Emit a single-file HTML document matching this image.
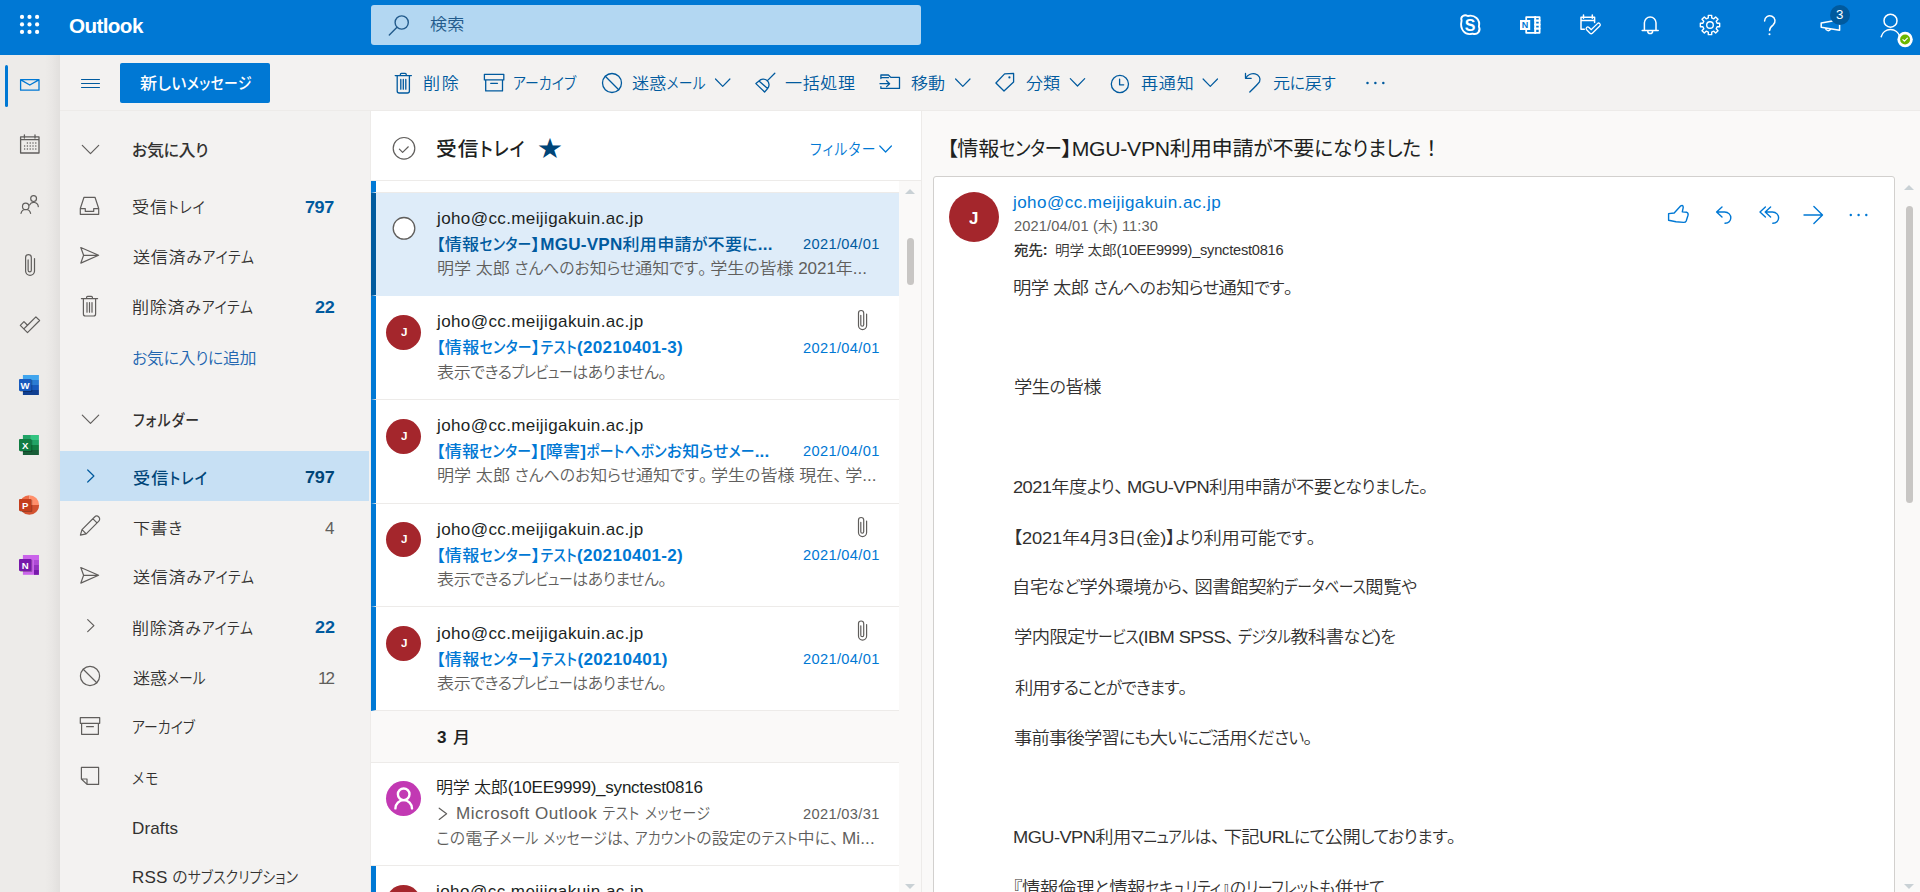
<!DOCTYPE html>
<html lang="ja">
<head>
<meta charset="utf-8">
<title>メール - Outlook</title>
<style>
*{box-sizing:border-box;margin:0;padding:0}
html,body{width:1920px;height:892px;overflow:hidden;background:#faf9f8}
body{position:relative;font-family:"Liberation Sans","Noto Sans CJK JP",sans-serif;font-size:16px;color:#323130;font-feature-settings:"palt" 1}
.k{display:inline-block;font-size:.81em;transform:scaleY(1.235);transform-origin:0 84.65%}
.h{display:inline-block;font-size:.93em;transform:scaleY(1.075);transform-origin:0 84.65%}
.p{font-feature-settings:normal;letter-spacing:-0.3em}
.t{position:absolute;white-space:nowrap;line-height:1;display:block;transform:scaleX(1.06);transform-origin:0 50%}
svg{position:absolute;overflow:visible;fill:none}
#hdr{position:absolute;left:0;top:0;width:1920px;height:55px;background:#0078d4}
#search{position:absolute;left:371px;top:5px;width:550px;height:40px;background:#b3d7f2;border-radius:3px}
#rail{position:absolute;left:0;top:55px;width:59.5px;height:837px;background:linear-gradient(to right,#edebe9 0,#edebe9 45px,#e9e7e5 52px,#e2e0de 59.5px)}
#nav{position:absolute;left:59px;top:55px;width:312px;height:837px;background:#f3f2f1;border-right:1px solid #edebe9}
#tool{position:absolute;left:59px;top:55px;width:1861px;height:56px;background:#f3f2f1;border-bottom:1px solid #edebe9}
#railsel{position:absolute;left:5px;top:65px;width:3px;height:42px;background:#0078d4;border-radius:2px}
#newbtn{position:absolute;left:120px;top:63px;width:150px;height:40px;background:#0078d4;border-radius:2px}
#navsel{position:absolute;left:60px;top:451px;width:309px;height:50px;background:#c7e0f4}
#list{position:absolute;left:371px;top:111px;width:551px;height:781px;background:#fff;border-right:1px solid #edebe9}
#listhead{position:absolute;left:371px;top:111px;width:550px;height:70px;border-bottom:1px solid #edebe9;background:#fff}
#track{position:absolute;left:899px;top:181px;width:22px;height:711px;background:#faf9f8}
#thumb{position:absolute;left:907px;top:238px;width:7px;height:47px;background:#c8c6c4;border-radius:4px}
.row{position:absolute;left:371px;width:528px;background:#fff;border-bottom:1px solid #edebe9}
.un{border-left:5px solid #0078d4}
.sel{background:#deecf9;border-left:5px solid #005a9e;border-bottom-color:#deecf9}
.grp{position:absolute;left:371px;width:528px;background:#faf9f8;border-bottom:1px solid #edebe9}
.av{position:absolute;left:386px;width:35px;height:35px;border-radius:50%;background:#a4262c}
#read{position:absolute;left:922px;top:111px;width:998px;height:781px;background:#faf9f8}
#card{position:absolute;left:933px;top:176px;width:962px;height:730px;background:#fff;border:1px solid #d2d0ce;border-radius:3px}
#rthumb{position:absolute;left:1906.3px;top:206px;width:7px;height:297px;background:#c8c6c4;border-radius:4px}
#bigav{position:absolute;left:949px;top:192px;width:50px;height:50px;border-radius:50%;background:#a4262c}
#badge{position:absolute;left:1830px;top:5px;width:20px;height:20px;border-radius:50%;background:#005a9e}
.tri{position:absolute;width:0;height:0;border-left:5px solid transparent;border-right:5px solid transparent}
</style>
</head>
<body>
<div id="read"></div>
<div id="card"></div>
<div id="rthumb"></div>
<div class="tri" style="left:1904px;top:184.5px;border-bottom:5.5px solid #c9d1d5"></div>
<div class="tri" style="left:1904px;top:884px;border-top:5.5px solid #c9d1d5"></div>
<div id="list"></div>
<div class="row un" style="top:181px;height:12px"></div>
<div class="row sel" style="top:193px;height:103px"></div>
<div class="row un" style="top:296px;height:104px"></div>
<div class="row un" style="top:400px;height:104px"></div>
<div class="row un" style="top:504px;height:103px"></div>
<div class="row un" style="top:607px;height:104px"></div>
<div class="grp" style="top:711px;height:52px"></div>
<div class="row" style="top:763px;height:103px"></div>
<div class="row un" style="top:866px;height:104px"></div>
<div id="track"></div><div id="thumb"></div>
<div class="tri" style="left:905px;top:189.3px;border-bottom:5.5px solid #c9d1d5"></div>
<div class="tri" style="left:905px;top:884px;border-top:5.5px solid #c9d1d5"></div>
<div class="av" style="top:315px"></div>
<div class="av" style="top:419px"></div>
<div class="av" style="top:522px"></div>
<div class="av" style="top:626px"></div>
<div class="av" style="top:781px;background:#c239b3"></div>
<div class="av" style="top:885px"></div>
<div id="listhead"></div>
<div id="nav"></div>
<div id="navsel"></div>
<div id="tool"></div>
<div id="rail"></div>
<div id="railsel"></div>
<div id="newbtn"></div>
<div id="hdr"><div id="search"></div></div>
<div id="bigav"></div>
<svg width="1920" height="892" viewBox="0 0 1920 892" style="left:0;top:0">
<circle cx="22" cy="16.9" r="2.1" fill="#fff"/>
<circle cx="22" cy="24.4" r="2.1" fill="#fff"/>
<circle cx="22" cy="31.9" r="2.1" fill="#fff"/>
<circle cx="29.5" cy="16.9" r="2.1" fill="#fff"/>
<circle cx="29.5" cy="24.4" r="2.1" fill="#fff"/>
<circle cx="29.5" cy="31.9" r="2.1" fill="#fff"/>
<circle cx="37.1" cy="16.9" r="2.1" fill="#fff"/>
<circle cx="37.1" cy="24.4" r="2.1" fill="#fff"/>
<circle cx="37.1" cy="31.9" r="2.1" fill="#fff"/>
<circle cx="401.7" cy="22.5" r="6.6" stroke="#225a8b" stroke-width="1.4" fill="none"/>
<path d="M397 27.3 L389.3 35" stroke="#225a8b" stroke-width="1.4" stroke-linecap="round" stroke-linejoin="round" />
<path d="M1461.6 20.5 C1460 16.5 1464.5 14 1467.8 16 C1474.5 14.2 1480.6 19.5 1478.9 26.6 C1481 30.5 1477.5 35.5 1472.6 33.6 C1465 35.8 1459.5 29.5 1461.6 20.5 Z" stroke="#fff" stroke-width="1.9" stroke-linecap="round" stroke-linejoin="round" />
<text x="1470.2" y="30.8" font-size="16" font-weight="700" fill="#fff" text-anchor="middle" font-family="Liberation Sans, sans-serif">S</text>
<path d="M1526.2 19.8 V17.1 H1539.6 V32.8 H1526.2 V30.2" stroke="#fff" stroke-width="1.8" stroke-linecap="round" stroke-linejoin="round" stroke-linejoin="miter" stroke-linecap="butt"/>
<path d="M1535.2 17 V33" stroke="#fff" stroke-width="2.0" stroke-linecap="round" stroke-linejoin="round" stroke-linecap="butt"/>
<path d="M1535.2 20.6 H1539.5 M1535.2 24.6 H1539.5 M1535.2 28.6 H1539.5" stroke="#fff" stroke-width="2.2" stroke-linecap="round" stroke-linejoin="round" stroke-linecap="butt"/>
<rect x="1520" y="20" width="10.2" height="10" rx="0" fill="#fff" />
<text x="1525.1" y="28.4" font-size="9" font-weight="700" fill="#0078d4" text-anchor="middle" font-family="Liberation Sans, sans-serif">N</text>
<path d="M1584.3 29.3 H1581 V17.2 H1594.6 V22.5 M1581 20.6 H1594.6 M1583.5 15 V18.3 M1592.3 15 V18.3" stroke="#fff" stroke-width="1.5" stroke-linecap="round" stroke-linejoin="round" />
<path d="M1587.8 28.6 L1591.2 32 L1598.6 24.8" stroke="#fff" stroke-width="4.6" stroke-linecap="round" stroke-linejoin="round" stroke-linecap="square" stroke-linejoin="miter"/>
<path d="M1587.8 28.6 L1591.2 32 L1598.6 24.8" stroke="#0078d4" stroke-width="2.0" stroke-linecap="round" stroke-linejoin="round" stroke-linecap="square" stroke-linejoin="miter"/>
<path d="M1644.4 30.4 V22.8 A5.8 5.8 0 0 1 1656 22.8 V30.4 M1642.2 30.6 H1658.2 M1647.8 31.2 A2.4 2.4 0 0 0 1652.6 31.2" stroke="#fff" stroke-width="1.5" stroke-linecap="round" stroke-linejoin="round" />
<path d="M1708.32 15.35 L1711.68 15.35 L1711.70 17.90 L1713.81 18.78 L1715.64 16.98 L1718.02 19.36 L1716.22 21.19 L1717.10 23.30 L1719.65 23.32 L1719.65 26.68 L1717.10 26.70 L1716.22 28.81 L1718.02 30.64 L1715.64 33.02 L1713.81 31.22 L1711.70 32.10 L1711.68 34.65 L1708.32 34.65 L1708.30 32.10 L1706.19 31.22 L1704.36 33.02 L1701.98 30.64 L1703.78 28.81 L1702.90 26.70 L1700.35 26.68 L1700.35 23.32 L1702.90 23.30 L1703.78 21.19 L1701.98 19.36 L1704.36 16.98 L1706.19 18.78 L1708.30 17.90 Z" stroke="#fff" stroke-width="1.4" stroke-linecap="round" stroke-linejoin="round" />
<circle cx="1710" cy="25" r="3.3" stroke="#fff" stroke-width="1.4" fill="none"/>
<path d="M1764.6 21 A5.2 5.2 0 1 1 1773.2 24.9 C1770.8 26.8 1769.6 27.8 1769.6 30.6" stroke="#fff" stroke-width="1.5" stroke-linecap="round" stroke-linejoin="round" />
<circle cx="1769.5" cy="34.3" r="1.05" fill="#fff"/>
<path d="M1821.2 23.1 L1839.6 19.8 V30.2 L1821.2 27.2 Z M1825.6 28.2 A2.6 2.6 0 0 0 1830.6 29" stroke="#fff" stroke-width="1.5" stroke-linecap="round" stroke-linejoin="round" />
<circle cx="1840" cy="15" r="10" fill="#005a9e"/>
<circle cx="1890.5" cy="20.7" r="6.5" stroke="#fff" stroke-width="1.5" fill="none"/>
<path d="M1881.2 36.8 A9.6 9.6 0 0 1 1899.8 36.8" stroke="#fff" stroke-width="1.5" stroke-linecap="round" stroke-linejoin="round" />
<circle cx="1905.1" cy="39.5" r="7.7" fill="#fff"/>
<circle cx="1905.1" cy="39.5" r="5" fill="#6bb700"/>
<path d="M1902.9 39.6 L1904.4 41.1 L1907.4 38.1" stroke="#fff" stroke-width="1.2" stroke-linecap="round" stroke-linejoin="round" />
<path d="M20.6 79.6 H39 V90.2 H20.6 Z M20.8 79.9 L29.8 85 L38.8 79.9" stroke="#0078d4" stroke-width="1.3" stroke-linecap="round" stroke-linejoin="round" />
<path d="M20.6 136.9 H39 V153 H20.6 Z M20.6 139.6 H39 M24.4 135 V138 M35 135 V138" stroke="#605e5c" stroke-width="1.3" stroke-linecap="round" stroke-linejoin="round" />
<circle cx="27.4" cy="143" r="0.75" fill="#605e5c"/>
<circle cx="27.4" cy="146" r="0.75" fill="#605e5c"/>
<circle cx="27.4" cy="149" r="0.75" fill="#605e5c"/>
<circle cx="30.2" cy="143" r="0.75" fill="#605e5c"/>
<circle cx="30.2" cy="146" r="0.75" fill="#605e5c"/>
<circle cx="30.2" cy="149" r="0.75" fill="#605e5c"/>
<circle cx="33" cy="143" r="0.75" fill="#605e5c"/>
<circle cx="33" cy="146" r="0.75" fill="#605e5c"/>
<circle cx="33" cy="149" r="0.75" fill="#605e5c"/>
<circle cx="35.8" cy="143" r="0.75" fill="#605e5c"/>
<circle cx="35.8" cy="146" r="0.75" fill="#605e5c"/>
<circle cx="35.8" cy="149" r="0.75" fill="#605e5c"/>
<circle cx="24.6" cy="146" r="0.75" fill="#605e5c"/>
<circle cx="24.6" cy="149" r="0.75" fill="#605e5c"/>
<circle cx="33.6" cy="198.6" r="2.9" stroke="#605e5c" stroke-width="1.2" fill="none"/>
<path d="M29.6 205 A4.6 4.6 0 0 1 38.3 206.6" stroke="#605e5c" stroke-width="1.2" stroke-linecap="round" stroke-linejoin="round" />
<circle cx="25.7" cy="206.4" r="3.2" stroke="#605e5c" stroke-width="1.2" fill="none"/>
<path d="M21 213.4 A4.9 4.9 0 0 1 30.6 213.4" stroke="#605e5c" stroke-width="1.2" stroke-linecap="round" stroke-linejoin="round" />
<path d="M34.51 258.56 V271.10 A4.46 4.46 0 0 1 25.60 271.10 V257.46 A2.86 2.86 0 0 1 31.32 257.46 V270.22 A1.59 1.59 0 0 1 28.13 270.22 V259.88" stroke="#605e5c" stroke-width="1.2" stroke-linecap="round" stroke-linejoin="round" />
<path d="M27.5 332.6 L39.6 320.5 L35.9 316.8 L27.5 325.25 L23.96 321.7 L20.3 325.4 Z M27.5 325.25 L23.8 328.9" stroke="#605e5c" stroke-width="1.2" stroke-linecap="round" stroke-linejoin="round" stroke-linejoin="miter"/>
<rect x="22.9" y="375" width="16" height="5" rx="0" fill="#41a5ee" />
<rect x="22.9" y="380" width="16" height="5" rx="0" fill="#2b7cd3" />
<rect x="22.9" y="385" width="16" height="5" rx="0" fill="#185abd" />
<rect x="22.9" y="390" width="16" height="5" rx="0" fill="#103f91" />
<rect x="20" y="379.6" width="12.3" height="12.3" rx="1" fill="rgba(0,0,0,.25)" />
<rect x="19" y="378.9" width="12.3" height="12.2" rx="1" fill="#185abd" />
<text x="25.15" y="388.6" font-size="9.6" font-weight="700" fill="#fff" text-anchor="middle" font-family="Liberation Sans, sans-serif">W</text>
<rect x="22.9" y="435" width="8" height="5" rx="0" fill="#21a366" />
<rect x="30.9" y="435" width="8" height="5" rx="0" fill="#33c481" />
<rect x="22.9" y="440" width="8" height="5" rx="0" fill="#107c41" />
<rect x="30.9" y="440" width="8" height="5" rx="0" fill="#21a366" />
<rect x="22.9" y="445" width="8" height="5" rx="0" fill="#107c41" />
<rect x="30.9" y="445" width="8" height="5" rx="0" fill="#107c41" />
<rect x="22.9" y="450" width="16" height="5" rx="0" fill="#185c37" />
<rect x="20" y="439.6" width="12.3" height="12.3" rx="1" fill="rgba(0,0,0,.25)" />
<rect x="19" y="438.9" width="12.3" height="12.2" rx="1" fill="#107c41" />
<text x="25.15" y="448.6" font-size="9.6" font-weight="700" fill="#fff" text-anchor="middle" font-family="Liberation Sans, sans-serif">X</text>
<path d="M29.3 505 V495.2 A9.8 9.8 0 0 0 19.5 505 Z" fill="#ed6c47"/>
<path d="M29.3 505 V495.2 A9.8 9.8 0 0 1 39.1 505 Z" fill="#ff8f6b"/>
<path d="M19.5 505 A9.8 9.8 0 0 0 39.1 505 Z" fill="#d35230"/>
<rect x="20" y="499.6" width="12.3" height="12.3" rx="1" fill="rgba(0,0,0,.25)" />
<rect x="19" y="498.9" width="12.3" height="12.2" rx="1" fill="#c43e1c" />
<text x="25.15" y="508.6" font-size="9.6" font-weight="700" fill="#fff" text-anchor="middle" font-family="Liberation Sans, sans-serif">P</text>
<rect x="22.9" y="555" width="16" height="19.8" rx="0" fill="#ca64ea" />
<rect x="34" y="555" width="4.9" height="5" rx="0" fill="#ca64ea" />
<rect x="34" y="560" width="4.9" height="5" rx="0" fill="#ae4bd5" />
<rect x="34" y="565" width="4.9" height="5" rx="0" fill="#9332bf" />
<rect x="34" y="570" width="4.9" height="4.8" rx="0" fill="#7719aa" />
<rect x="20" y="559.6" width="12.3" height="12.3" rx="1" fill="rgba(0,0,0,.25)" />
<rect x="19" y="558.9" width="12.3" height="12.2" rx="1" fill="#7719aa" />
<text x="25.15" y="568.6" font-size="9.6" font-weight="700" fill="#fff" text-anchor="middle" font-family="Liberation Sans, sans-serif">N</text>
<path d="M81.5 79.5 H99.5 M81.5 83.5 H99.5 M81.5 87.5 H99.5" stroke="#005a9e" stroke-width="1.0" stroke-linecap="round" stroke-linejoin="round" stroke-linecap="butt"/>
<path d="M82.3 145.4 L90.5 153.6 L98.7 145.4" stroke="#605e5c" stroke-width="1.2" stroke-linecap="round" stroke-linejoin="round" />
<path d="M82.3 415.2 L90.5 423.40000000000003 L98.7 415.2" stroke="#605e5c" stroke-width="1.2" stroke-linecap="round" stroke-linejoin="round" />
<path d="M87.7 470 L93.89999999999999 476 L87.7 482" stroke="#005a9e" stroke-width="1.2" stroke-linecap="round" stroke-linejoin="round" />
<path d="M87.7 619.6 L93.89999999999999 625.6 L87.7 631.6" stroke="#605e5c" stroke-width="1.2" stroke-linecap="round" stroke-linejoin="round" />
<path d="M80.3 208.5 L84 197.3 H95 L98.7 208.5 V214.3 H80.3 Z M80.5 208.6 H85.3 V211.4 H93.7 V208.6 H98.5" stroke="#605e5c" stroke-width="1.2" stroke-linecap="round" stroke-linejoin="round" />
<path d="M80.8 247.5 L98.6 255.3 L80.8 263.1 L83.6 255.3 Z M83.8 255.3 H98" stroke="#605e5c" stroke-width="1.2" stroke-linecap="round" stroke-linejoin="round" />
<path d="M80.8 567.5 L98.6 575.3 L80.8 583.0999999999999 L83.6 575.3 Z M83.8 575.3 H98" stroke="#605e5c" stroke-width="1.2" stroke-linecap="round" stroke-linejoin="round" />
<path d="M81.4 298.6 H97.60000000000001 M86.60000000000001 298.4 V297.2 Q86.60000000000001 296.3 87.60000000000001 296.3 H91.4 Q92.4 296.3 92.4 297.2 V298.4 M83.4 298.8 V314.0 Q83.4 316.0 85.4 316.0 H93.60000000000001 Q95.60000000000001 316.0 95.60000000000001 314.0 V298.8 M87.0 302.5 V312.2 M89.5 302.5 V312.2 M92.0 302.5 V312.2" stroke="#605e5c" stroke-width="1.2" stroke-linecap="round" stroke-linejoin="round" />
<path d="M80.4 535.2 L82 529.6 L94.6 517 A2.9 2.9 0 0 1 98.8 521.2 L86.2 533.8 Z M82.2 529.8 L86 533.6 M93 518.8 L97 522.8" stroke="#605e5c" stroke-width="1.2" stroke-linecap="round" stroke-linejoin="round" />
<circle cx="90" cy="676" r="9.6" stroke="#605e5c" stroke-width="1.2" fill="none"/>
<path d="M83.21 669.21 L96.79 682.79" stroke="#605e5c" stroke-width="1.2" stroke-linecap="round" stroke-linejoin="round" />
<path d="M80.3 717.7 H99.69999999999999 V723.3000000000001 H80.3 Z M81.6 723.5 V734.3000000000001 H98.4 V723.5 M86.6 726.7 H93.39999999999999" stroke="#605e5c" stroke-width="1.2" stroke-linecap="round" stroke-linejoin="round" />
<path d="M81.4 767.4 H98.6 V784.4 H87 L81.4 779 Z M81.6 779 H87 V784.2" stroke="#605e5c" stroke-width="1.2" stroke-linecap="round" stroke-linejoin="round" />
<path d="M395.2 75.6 H411.4 M400.4 75.4 V74.2 Q400.4 73.3 401.4 73.3 H405.2 Q406.2 73.3 406.2 74.2 V75.4 M397.2 75.8 V91.0 Q397.2 93.0 399.2 93.0 H407.4 Q409.4 93.0 409.4 91.0 V75.8 M400.8 79.5 V89.2 M403.3 79.5 V89.2 M405.8 79.5 V89.2" stroke="#005a9e" stroke-width="1.3" stroke-linecap="round" stroke-linejoin="round" />
<path d="M484.4 74.3 H503.79999999999995 V79.89999999999999 H484.4 Z M485.7 80.1 V90.9 H502.5 V80.1 M490.7 83.3 H497.5" stroke="#005a9e" stroke-width="1.3" stroke-linecap="round" stroke-linejoin="round" />
<circle cx="612" cy="83" r="9.5" stroke="#005a9e" stroke-width="1.3" fill="none"/>
<path d="M605.28 76.28 L618.72 89.72" stroke="#005a9e" stroke-width="1.3" stroke-linecap="round" stroke-linejoin="round" />
<path d="M715.5 79.0 L722.7 86.4 L729.9000000000001 79.0" stroke="#005a9e" stroke-width="1.2" stroke-linecap="round" stroke-linejoin="round" />
<path d="M774.8 73.3 L767.2 80.9 M759 81 A5.7 5.7 0 0 1 767.6 88.6 Z M759 81 L755.9 83.6 L764.6 92 L767.6 88.6" stroke="#005a9e" stroke-width="1.3" stroke-linecap="round" stroke-linejoin="round" />
<path d="M880.9 78.6 V75 H888.4 L890.8 77.4 H899.5 V88.4 H880.9 V86.6 M881 77.6 H888.6 M880 83.7 H889.4 M886.6 80.8 L889.6 83.7 L886.6 86.6" stroke="#005a9e" stroke-width="1.3" stroke-linecap="round" stroke-linejoin="round" />
<path d="M955.5999999999999 79.0 L962.8 86.4 L970.0 79.0" stroke="#005a9e" stroke-width="1.2" stroke-linecap="round" stroke-linejoin="round" />
<path d="M1013.6 73.4 L1004.6 73.9 L995.9 83 L1004 91 L1013.6 82 Z" stroke="#005a9e" stroke-width="1.3" stroke-linecap="round" stroke-linejoin="round" />
<circle cx="1009.4" cy="77.4" r="1.1" fill="#005a9e"/>
<path d="M1070.3 78.6 L1077.5 86.0 L1084.7 78.6" stroke="#005a9e" stroke-width="1.2" stroke-linecap="round" stroke-linejoin="round" />
<circle cx="1119.9" cy="84" r="8.6" stroke="#005a9e" stroke-width="1.3" fill="none"/>
<path d="M1119.6 79.2 V84.8 H1123.7" stroke="#005a9e" stroke-width="1.3" stroke-linecap="round" stroke-linejoin="round" />
<path d="M1203.1 79.0 L1210.3 86.4 L1217.5 79.0" stroke="#005a9e" stroke-width="1.2" stroke-linecap="round" stroke-linejoin="round" />
<path d="M1245.5 73.5 V78.3 H1251.2 M1245.8 78 C1248 74.6 1252 73 1255.2 73.8 C1259 74.8 1261 78.6 1259.6 81.6 C1258.8 83.2 1257 85 1249.8 92" stroke="#005a9e" stroke-width="1.3" stroke-linecap="round" stroke-linejoin="round" />
<circle cx="1367.5" cy="82.9" r="1.25" fill="#005a9e"/>
<circle cx="1375.4" cy="82.9" r="1.25" fill="#005a9e"/>
<circle cx="1383.3" cy="82.9" r="1.25" fill="#005a9e"/>
<circle cx="404" cy="148.3" r="10.8" stroke="#605e5c" stroke-width="1.2" fill="none"/>
<path d="M399.4 149.2 L402.6 152.4 L408.3 146.8" stroke="#605e5c" stroke-width="1.2" stroke-linecap="round" stroke-linejoin="round" />
<path d="M879.8000000000001 146.0 L885.6 152.0 L891.4 146.0" stroke="#0078d4" stroke-width="1.2" stroke-linecap="round" stroke-linejoin="round" />
<circle cx="404" cy="228.3" r="10.8" stroke="#605e5c" stroke-width="1.3" fill="#fff"/>
<path d="M866.60 314.10 V325.50 A4.05 4.05 0 0 1 858.50 325.50 V313.10 A2.60 2.60 0 0 1 863.70 313.10 V324.70 A1.45 1.45 0 0 1 860.80 324.70 V315.30" stroke="#605e5c" stroke-width="1.2" stroke-linecap="round" stroke-linejoin="round" />
<path d="M866.60 521.10 V532.50 A4.05 4.05 0 0 1 858.50 532.50 V520.10 A2.60 2.60 0 0 1 863.70 520.10 V531.70 A1.45 1.45 0 0 1 860.80 531.70 V522.30" stroke="#605e5c" stroke-width="1.2" stroke-linecap="round" stroke-linejoin="round" />
<path d="M866.60 624.60 V636.00 A4.05 4.05 0 0 1 858.50 636.00 V623.60 A2.60 2.60 0 0 1 863.70 623.60 V635.20 A1.45 1.45 0 0 1 860.80 635.20 V625.80" stroke="#605e5c" stroke-width="1.2" stroke-linecap="round" stroke-linejoin="round" />
<circle cx="403.7" cy="794.3" r="5.8" stroke="#fff" stroke-width="2.4" fill="none"/>
<path d="M395.4 808.4 A8.3 8.3 0 0 1 412 808.4" stroke="#fff" stroke-width="2.4" stroke-linecap="round" stroke-linejoin="round" stroke-linecap="butt"/>
<path d="M439.2 808.2 L446.6 813.8 L439.2 819.4" stroke="#605e5c" stroke-width="1.2" stroke-linecap="round" stroke-linejoin="round" />
<path d="M1668.6 213.6 L1674.2 213 L1680.8 205.8 Q1683.2 204.6 1683.2 207.6 L1682.3 211.9 L1686.8 212.3 Q1688.6 213 1688 215.2 L1686.2 221 Q1685.6 222.5 1683.5 222.4 L1676 221.8 L1668.6 220.2 Z" stroke="#0078d4" stroke-width="1.4" stroke-linecap="round" stroke-linejoin="round" />
<path d="M1722 207 L1716.6 212 L1722 217 M1717 212 H1724.6 C1728.5 212 1731 215 1730.8 218 C1730.6 221 1728.5 223 1725 223.3" stroke="#0078d4" stroke-width="1.4" stroke-linecap="round" stroke-linejoin="round" />
<path d="M1770.6 207 L1765.2 212 L1770.6 217 M1765.4 207 L1760 212 L1765.4 217 M1765.8 212 H1772.4 C1776.3 212 1778.8 215 1778.6 218 C1778.4 221 1776.3 223 1772.8 223.3" stroke="#0078d4" stroke-width="1.4" stroke-linecap="round" stroke-linejoin="round" />
<path d="M1804 215 H1822.4 M1813.9 206.6 L1822.5 215 L1813.9 223.4" stroke="#0078d4" stroke-width="1.4" stroke-linecap="round" stroke-linejoin="round" />
<circle cx="1850.8" cy="215" r="1.2" fill="#0078d4"/>
<circle cx="1858.6" cy="215" r="1.2" fill="#0078d4"/>
<circle cx="1866.3" cy="215" r="1.2" fill="#0078d4"/>
</svg>

<span class="t" style="left:69.34px;top:17.29px;font-size:19.5px;color:#fff;font-weight:700;letter-spacing:-0.582px;">Outlook</span>
<span class="t" style="left:429.56px;top:16.49px;font-size:16.1px;color:#225a8b;font-weight:350;letter-spacing:0.233px;">検索</span>
<span class="t" style="left:1836.03px;top:8.61px;font-size:12.5px;color:#fff;font-weight:350;">3</span>
<span class="t" style="left:139.59px;top:75.49px;font-size:16.1px;color:#fff;font-weight:500;letter-spacing:0.406px;">新<span class="h">しい</span><span class="k">メッセージ</span></span>
<span class="t" style="left:423.17px;top:75.49px;font-size:16.1px;color:#005a9e;font-weight:350;letter-spacing:1.662px;">削除</span>
<span class="t" style="left:513.40px;top:75.49px;font-size:16.1px;color:#005a9e;font-weight:350;letter-spacing:0.102px;"><span class="k">アーカイブ</span></span>
<span class="t" style="left:631.89px;top:75.49px;font-size:16.1px;color:#005a9e;font-weight:350;letter-spacing:0.223px;">迷惑<span class="k">メール</span></span>
<span class="t" style="left:785.18px;top:75.49px;font-size:16.1px;color:#005a9e;font-weight:350;letter-spacing:0.569px;">一括処理</span>
<span class="t" style="left:910.67px;top:75.49px;font-size:16.1px;color:#005a9e;font-weight:350;letter-spacing:-0.021px;">移動</span>
<span class="t" style="left:1026.06px;top:75.49px;font-size:16.1px;color:#005a9e;font-weight:350;letter-spacing:-0.071px;">分類</span>
<span class="t" style="left:1140.57px;top:75.49px;font-size:16.1px;color:#005a9e;font-weight:350;letter-spacing:0.760px;">再通知</span>
<span class="t" style="left:1272.69px;top:75.49px;font-size:16.1px;color:#005a9e;font-weight:350;letter-spacing:-0.339px;">元<span class="h">に</span>戻<span class="h">す</span></span>
<span class="t" style="left:132.29px;top:142.49px;font-size:16.1px;color:#323130;font-weight:500;letter-spacing:-0.323px;"><span class="h">お</span>気<span class="h">に</span>入<span class="h">り</span></span>
<span class="t" style="left:132.35px;top:199.49px;font-size:16.1px;color:#323130;font-weight:350;letter-spacing:0.872px;">受信<span class="k">トレイ</span></span>
<span class="t" style="left:304.93px;top:198.84px;font-size:17px;color:#005a9e;font-weight:700;letter-spacing:-0.409px;">797</span>
<span class="t" style="left:132.89px;top:249.49px;font-size:16.1px;color:#323130;font-weight:350;letter-spacing:0.687px;">送信済<span class="h">み</span><span class="k">アイテム</span></span>
<span class="t" style="left:132.17px;top:299.49px;font-size:16.1px;color:#323130;font-weight:350;letter-spacing:0.693px;">削除済<span class="h">み</span><span class="k">アイテム</span></span>
<span class="t" style="left:314.68px;top:298.84px;font-size:17px;color:#005a9e;font-weight:700;letter-spacing:-0.143px;">22</span>
<span class="t" style="left:131.85px;top:349.99px;font-size:16.1px;color:#2266b0;font-weight:350;letter-spacing:-0.348px;"><span class="h">お</span>気<span class="h">に</span>入<span class="h">りに</span>追加</span>
<span class="t" style="left:132.82px;top:412.49px;font-size:16.1px;color:#323130;font-weight:500;letter-spacing:1.060px;"><span class="k">フォルダー</span></span>
<span class="t" style="left:132.51px;top:469.99px;font-size:16.1px;color:#004578;font-weight:500;letter-spacing:1.144px;">受信<span class="k">トレイ</span></span>
<span class="t" style="left:304.93px;top:469.34px;font-size:17px;color:#004578;font-weight:700;letter-spacing:-0.149px;">797</span>
<span class="t" style="left:132.82px;top:519.99px;font-size:16.1px;color:#323130;font-weight:350;letter-spacing:0.480px;">下書<span class="h">き</span></span>
<span class="t" style="left:325.12px;top:519.59px;font-size:16.1px;color:#605e5c;font-weight:350;">4</span>
<span class="t" style="left:132.89px;top:569.49px;font-size:16.1px;color:#323130;font-weight:350;letter-spacing:0.687px;">送信済<span class="h">み</span><span class="k">アイテム</span></span>
<span class="t" style="left:132.17px;top:619.99px;font-size:16.1px;color:#323130;font-weight:350;letter-spacing:0.693px;">削除済<span class="h">み</span><span class="k">アイテム</span></span>
<span class="t" style="left:314.68px;top:619.34px;font-size:17px;color:#005a9e;font-weight:700;letter-spacing:-0.011px;">22</span>
<span class="t" style="left:132.89px;top:669.99px;font-size:16.1px;color:#323130;font-weight:350;letter-spacing:-0.049px;">迷惑<span class="k">メール</span></span>
<span class="t" style="left:318.04px;top:669.59px;font-size:16.1px;color:#605e5c;font-weight:350;letter-spacing:-1.976px;">12</span>
<span class="t" style="left:132.40px;top:719.49px;font-size:16.1px;color:#323130;font-weight:350;letter-spacing:0.077px;"><span class="k">アーカイブ</span></span>
<span class="t" style="left:132.38px;top:769.99px;font-size:16.1px;color:#323130;font-weight:350;letter-spacing:1.006px;"><span class="k">メモ</span></span>
<span class="t" style="left:132.12px;top:820.37px;font-size:16.1px;color:#323130;font-weight:350;letter-spacing:0.120px;">Drafts</span>
<span class="t" style="left:132.12px;top:869.49px;font-size:16.1px;color:#323130;font-weight:350;letter-spacing:0.114px;">RSS <span class="h">の</span><span class="k">サブスクリプション</span></span>
<span class="t" style="left:436.45px;top:139.88px;font-size:19.55px;color:#201f1e;font-weight:500;letter-spacing:1.067px;">受信<span class="k">トレイ</span></span>
<span class="t" style="left:538.35px;top:137.80px;font-size:22.5px;color:#004578;font-weight:350;">★</span>
<span class="t" style="left:809.69px;top:140.99px;font-size:16.1px;color:#0078d4;font-weight:350;letter-spacing:1.150px;"><span class="k">フィルター</span></span>
<span class="t" style="left:436.78px;top:209.86px;font-size:16.1px;color:#201f1e;font-weight:350;letter-spacing:0.344px;">joho@cc.meijigakuin.ac.jp</span>
<span class="t" style="left:435.75px;top:235.59px;font-size:16.1px;color:#005a9e;font-weight:500;letter-spacing:0.233px;">【情報<span class="k">センター</span>】<b>MGU-VPN</b>利用申請<span class="h">が</span>不要<span class="h">に</span><b>...</b></span>
<span class="t" style="left:802.53px;top:238.32px;font-size:13.8px;color:#005a9e;font-weight:350;letter-spacing:0.324px;">2021/04/01</span>
<span class="t" style="left:437.12px;top:260.29px;font-size:16.1px;color:#605e5c;font-weight:350;letter-spacing:-0.054px;">明学 太郎 <span class="h">さんへのお</span>知<span class="h">らせ</span>通知<span class="h">です</span><span class="p">。</span>学生<span class="h">の</span>皆様 2021年...</span>
<span class="t" style="left:436.78px;top:313.36px;font-size:16.1px;color:#201f1e;font-weight:350;letter-spacing:0.344px;">joho@cc.meijigakuin.ac.jp</span>
<span class="t" style="left:435.75px;top:339.09px;font-size:16.1px;color:#0078d4;font-weight:500;letter-spacing:0.274px;">【情報<span class="k">センター</span>】<span class="k">テスト</span><b>(20210401-3)</b></span>
<span class="t" style="left:802.53px;top:341.82px;font-size:13.8px;color:#0078d4;font-weight:350;letter-spacing:0.324px;">2021/04/01</span>
<span class="t" style="left:436.86px;top:363.79px;font-size:16.1px;color:#605e5c;font-weight:350;letter-spacing:-0.398px;">表示<span class="h">できる</span><span class="k">プレビュー</span><span class="h">はありません</span><span class="p">。</span></span>
<span class="t" style="left:436.78px;top:416.86px;font-size:16.1px;color:#201f1e;font-weight:350;letter-spacing:0.344px;">joho@cc.meijigakuin.ac.jp</span>
<span class="t" style="left:435.75px;top:442.59px;font-size:16.1px;color:#0078d4;font-weight:500;letter-spacing:0.192px;">【情報<span class="k">センター</span>】<b>[</b>障害<b>]</b><span class="k">ポート</span><span class="h">へ</span><span class="k">ボン</span><span class="h">お</span>知<span class="h">らせ</span><span class="k">メー</span><b>...</b></span>
<span class="t" style="left:802.53px;top:445.32px;font-size:13.8px;color:#0078d4;font-weight:350;letter-spacing:0.324px;">2021/04/01</span>
<span class="t" style="left:437.12px;top:467.29px;font-size:16.1px;color:#605e5c;font-weight:350;letter-spacing:-0.009px;">明学 太郎 <span class="h">さんへのお</span>知<span class="h">らせ</span>通知<span class="h">です</span><span class="p">。</span>学生<span class="h">の</span>皆様 現在<span class="p">、</span>学...</span>
<span class="t" style="left:436.78px;top:520.86px;font-size:16.1px;color:#201f1e;font-weight:350;letter-spacing:0.344px;">joho@cc.meijigakuin.ac.jp</span>
<span class="t" style="left:435.75px;top:546.59px;font-size:16.1px;color:#0078d4;font-weight:500;letter-spacing:0.274px;">【情報<span class="k">センター</span>】<span class="k">テスト</span><b>(20210401-2)</b></span>
<span class="t" style="left:802.53px;top:549.32px;font-size:13.8px;color:#0078d4;font-weight:350;letter-spacing:0.324px;">2021/04/01</span>
<span class="t" style="left:436.86px;top:571.29px;font-size:16.1px;color:#605e5c;font-weight:350;letter-spacing:-0.398px;">表示<span class="h">できる</span><span class="k">プレビュー</span><span class="h">はありません</span><span class="p">。</span></span>
<span class="t" style="left:436.78px;top:624.86px;font-size:16.1px;color:#201f1e;font-weight:350;letter-spacing:0.344px;">joho@cc.meijigakuin.ac.jp</span>
<span class="t" style="left:435.75px;top:650.59px;font-size:16.1px;color:#0078d4;font-weight:500;letter-spacing:0.299px;">【情報<span class="k">センター</span>】<span class="k">テスト</span><b>(20210401)</b></span>
<span class="t" style="left:802.53px;top:653.32px;font-size:13.8px;color:#0078d4;font-weight:350;letter-spacing:0.324px;">2021/04/01</span>
<span class="t" style="left:436.86px;top:675.29px;font-size:16.1px;color:#605e5c;font-weight:350;letter-spacing:-0.398px;">表示<span class="h">できる</span><span class="k">プレビュー</span><span class="h">はありません</span><span class="p">。</span></span>
<span class="t" style="left:436.78px;top:729.49px;font-size:16.1px;color:#201f1e;font-weight:500;letter-spacing:0.876px;"><b>3</b> 月</span>
<span class="t" style="left:436.12px;top:779.19px;font-size:16.1px;color:#201f1e;font-weight:350;letter-spacing:-0.246px;">明学 太郎(10EE9999)_synctest0816</span>
<span class="t" style="left:456.12px;top:805.09px;font-size:16.1px;color:#605e5c;font-weight:350;letter-spacing:0.478px;">Microsoft Outlook <span class="k">テスト</span> <span class="k">メッセージ</span></span>
<span class="t" style="left:802.53px;top:807.82px;font-size:13.8px;color:#605e5c;font-weight:350;letter-spacing:0.324px;">2021/03/31</span>
<span class="t" style="left:435.71px;top:829.79px;font-size:16.1px;color:#605e5c;font-weight:350;letter-spacing:0.103px;"><span class="h">この</span>電子<span class="k">メール</span> <span class="k">メッセージ</span><span class="h">は</span><span class="p">、</span><span class="k">アカウント</span><span class="h">の</span>設定<span class="h">の</span><span class="k">テスト</span>中<span class="h">に</span><span class="p">、</span>Mi...</span>
<span class="t" style="left:435.51px;top:883.36px;font-size:16.1px;color:#201f1e;font-weight:350;letter-spacing:0.398px;">joho@cc.meijigakuin.ac.jp</span>
<span class="t" style="left:946.58px;top:138.67px;font-size:20px;color:#201f1e;letter-spacing:-0.278px;">【情報<span class="k">センター</span>】MGU-VPN利用申請<span class="h">が</span>不要<span class="h">になりました</span><span class="p">！</span></span>
<span class="t" style="left:1012.78px;top:193.76px;font-size:16.1px;color:#0078d4;font-weight:350;letter-spacing:0.399px;">joho@cc.meijigakuin.ac.jp</span>
<span class="t" style="left:1013.53px;top:219.72px;font-size:13.8px;color:#605e5c;font-weight:350;letter-spacing:0.139px;">2021/04/01 (木) 11:30</span>
<span class="t" style="left:1013.74px;top:244.36px;font-size:13.8px;color:#323130;font-weight:500;letter-spacing:-0.267px;">宛先<b>:</b></span>
<span class="t" style="left:1055.47px;top:244.36px;font-size:13.8px;color:#323130;font-weight:350;letter-spacing:-0.219px;">明学 太郎(10EE9999)_synctest0816</span>
<span class="t" style="left:968.94px;top:211.14px;font-size:16px;color:#fff;font-weight:700;">J</span>
<span class="t" style="left:1013.45px;top:279.95px;font-size:17.25px;color:#323130;font-weight:350;letter-spacing:-0.520px;">明学 太郎 <span class="h">さんへのお</span>知<span class="h">らせ</span>通知<span class="h">です</span><span class="p">。</span></span>
<span class="t" style="left:1014.08px;top:379.45px;font-size:17.25px;color:#323130;font-weight:350;letter-spacing:-0.466px;">学生<span class="h">の</span>皆様</span>
<span class="t" style="left:1013.32px;top:479.45px;font-size:17.25px;color:#323130;font-weight:350;letter-spacing:-0.560px;">2021年度<span class="h">より</span><span class="p">、</span>MGU-VPN利用申請<span class="h">が</span>不要<span class="h">となりました</span><span class="p">。</span></span>
<span class="t" style="left:1012.55px;top:529.95px;font-size:17.25px;color:#323130;font-weight:350;letter-spacing:-0.165px;">【2021年4月3日(金)】<span class="h">より</span>利用可能<span class="h">です</span><span class="p">。</span></span>
<span class="t" style="left:1012.19px;top:579.45px;font-size:17.25px;color:#323130;font-weight:350;letter-spacing:-0.353px;">自宅<span class="h">など</span>学外環境<span class="h">から</span><span class="p">、</span>図書館契約<span class="k">データベース</span>閲覧<span class="h">や</span></span>
<span class="t" style="left:1014.08px;top:629.45px;font-size:17.25px;color:#323130;font-weight:350;letter-spacing:-0.554px;">学内限定<span class="k">サービス</span>(IBM SPSS<span class="p">、</span><span class="k">デジタル</span>教科書<span class="h">など</span>)<span class="h">を</span></span>
<span class="t" style="left:1015.03px;top:679.95px;font-size:17.25px;color:#323130;font-weight:350;letter-spacing:-0.992px;">利用<span class="h">することができます</span><span class="p">。</span></span>
<span class="t" style="left:1014.32px;top:729.95px;font-size:17.25px;color:#323130;font-weight:350;letter-spacing:-0.764px;">事前事後学習<span class="h">にも</span>大<span class="h">いにご</span>活用<span class="h">ください</span><span class="p">。</span></span>
<span class="t" style="left:1013.44px;top:829.45px;font-size:17.25px;color:#323130;font-weight:350;letter-spacing:-0.549px;">MGU-VPN利用<span class="k">マニュアル</span><span class="h">は</span><span class="p">、</span>下記URL<span class="h">にて</span>公開<span class="h">しております</span><span class="p">。</span></span>
<span class="t" style="left:1012.69px;top:879.95px;font-size:17.25px;color:#323130;font-weight:350;letter-spacing:-0.176px;">『情報倫理<span class="h">と</span>情報<span class="k">セキュリティ</span>』<span class="h">の</span><span class="k">リーフレット</span><span class="h">も</span>併<span class="h">せて</span></span>
<span class="t" style="left:400.56px;top:327.09px;font-size:11px;color:#fff;font-weight:700;">J</span>
<span class="t" style="left:400.56px;top:430.59px;font-size:11px;color:#fff;font-weight:700;">J</span>
<span class="t" style="left:400.56px;top:534.09px;font-size:11px;color:#fff;font-weight:700;">J</span>
<span class="t" style="left:400.56px;top:637.59px;font-size:11px;color:#fff;font-weight:700;">J</span>
</body>
</html>
